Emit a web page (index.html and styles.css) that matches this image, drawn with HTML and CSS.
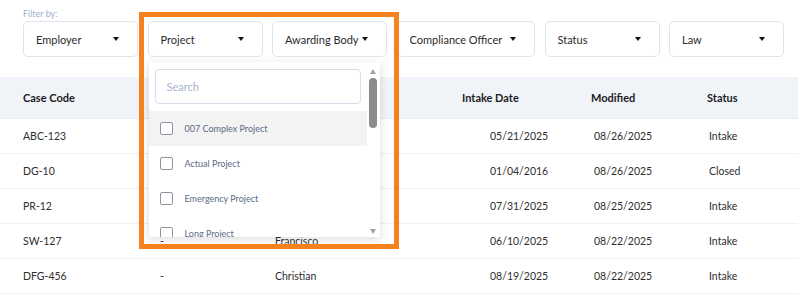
FILE: index.html
```html
<!DOCTYPE html>
<html lang="en">
<head>
  <meta charset="UTF-8">
  <meta name="viewport" content="width=device-width, initial-scale=1.0">
  <title>Cases</title>
  <link rel="stylesheet" href="styles.css">
</head>
<body>

  <!-- Filters -->
  <div class="filters">
    <div class="filter-label">Filter by:</div>
    <div class="filter-bar">
      <div class="filter"><span class="filter-text">Employer</span><span class="caret"></span></div>
      <div class="filter open">
        <span class="filter-text">Project</span><span class="caret"></span>

        <!-- Project dropdown -->
        <div class="dropdown">
          <div class="dropdown-list">
            <div class="search-wrap">
              <input type="text" class="search" placeholder="Search">
            </div>
            <div class="option active"><span class="checkbox"></span>007 Complex Project</div>
            <div class="option"><span class="checkbox"></span>Actual Project</div>
            <div class="option"><span class="checkbox"></span>Emergency Project</div>
            <div class="option"><span class="checkbox"></span>Long Project</div>
          </div>
          <div class="scrollbar">
            <span class="arrow-up"></span>
            <span class="thumb"></span>
            <span class="arrow-down"></span>
          </div>
        </div>
      </div>
      <div class="filter"><span class="filter-text">Awarding Body</span><span class="caret"></span></div>
      <div class="filter wide"><span class="filter-text">Compliance Officer</span><span class="caret"></span></div>
      <div class="filter"><span class="filter-text">Status</span><span class="caret"></span></div>
      <div class="filter"><span class="filter-text">Law</span><span class="caret"></span></div>
    </div>
  </div>

  <!-- Cases table -->
  <div class="table">
    <div class="row head">
      <div>Case Code</div>
      <div></div>
      <div></div>
      <div>Intake Date</div>
      <div>Modified</div>
      <div>Status</div>
    </div>
    <div class="row">
      <div>ABC-123</div><div></div><div></div>
      <div class="intake">05/21/2025</div><div class="mod">08/26/2025</div><div class="stat">Intake</div>
    </div>
    <div class="row">
      <div>DG-10</div><div></div><div></div>
      <div class="intake">01/04/2016</div><div class="mod">08/26/2025</div><div class="stat">Closed</div>
    </div>
    <div class="row">
      <div>PR-12</div><div></div><div></div>
      <div class="intake">07/31/2025</div><div class="mod">08/25/2025</div><div class="stat">Intake</div>
    </div>
    <div class="row">
      <div>SW-127</div><div>-</div><div>Francisco</div>
      <div class="intake">06/10/2025</div><div class="mod">08/22/2025</div><div class="stat">Intake</div>
    </div>
    <div class="row">
      <div>DFG-456</div><div>-</div><div>Christian</div>
      <div class="intake">08/19/2025</div><div class="mod">08/22/2025</div><div class="stat">Intake</div>
    </div>
  </div>

  <!-- highlight frame -->
  <div class="highlight"></div>

</body>
</html>
```

FILE: styles.css
```css
  * {
    box-sizing: border-box;
  }
  body, html {
    margin: 0;
    padding: 0;
    width: 100%;
    height: 100%;
    font-family: Lato, "Liberation Sans", sans-serif;
    background-color: #fff;
    color: #2a2a2a;
    overflow: hidden;
  }
  .filters {
    padding: 9px 0 0 23px;
  }
  .filter-label {
    font-size: 9px;
    color: #a3b1cc;
    height: 12px;
    line-height: 10px;
  }
  .filter-bar {
    display: flex;
    gap: 9.5px;
  }
  .filter {
    position: relative;
    width: 115px;
    height: 36px;
    border: 1px solid #dfe4ec;
    border-radius: 5px;
    display: flex;
    align-items: center;
    padding: 0 18px 0 12px;
    font-size: 11px;
    color: #2b2b2b;
  }
  .filter.wide {
    width: 138.5px;
  }
  .filter-text {
    flex: 1;
    overflow: hidden;
    white-space: nowrap;
  }
  .caret {
    width: 0;
    height: 0;
    margin-left: 3px;
    border-left: 3.5px solid transparent;
    border-right: 3.5px solid transparent;
    border-top: 4px solid #111;
  }

  /* dropdown */
  .dropdown {
    position: absolute;
    top: 40px;
    left: 0;
    width: 231px;
    height: 175px;
    background: #fff;
    display: flex;
    overflow: hidden;
    box-shadow: 0 2px 8px rgba(0, 0, 0, 0.14);
    z-index: 5;
  }
  .dropdown-list {
    flex: 1;
  }
  .search-wrap {
    padding: 7px 6px;
  }
  .search {
    width: 100%;
    height: 35px;
    border: 1px solid #d8dfea;
    border-radius: 4px;
    padding: 0 11px;
    font-family: inherit;
    font-size: 11px;
    outline: none;
  }
  .search::placeholder {
    color: #a9b5cc;
  }
  .option {
    height: 35px;
    display: flex;
    align-items: center;
    gap: 12px;
    padding-left: 11px;
    font-size: 9px;
    color: #5b6a85;
  }
  .option.active {
    background: #f3f3f3;
  }
  .checkbox {
    width: 13px;
    height: 13px;
    border: 1.5px solid #8d94a0;
    border-radius: 2px;
    background: #fff;
  }
  .scrollbar {
    width: 13px;
    display: flex;
    flex-direction: column;
    align-items: center;
    padding-top: 7px;
  }
  .arrow-up, .arrow-down {
    width: 0;
    height: 0;
    border-left: 3.5px solid transparent;
    border-right: 3.5px solid transparent;
  }
  .arrow-up {
    border-bottom: 5px solid #a3a3a3;
  }
  .arrow-down {
    border-top: 5px solid #a3a3a3;
    margin-top: 101px;
  }
  .thumb {
    width: 8px;
    height: 50px;
    margin-top: 4px;
    border-radius: 4px;
    background: #8c8c8c;
  }

  /* table */
  .table {
    margin-top: 20px;
  }
  .row {
    display: grid;
    grid-template-columns: 137px 115px 187px 129px 116px auto;
    align-items: center;
    height: 35px;
    padding-left: 23px;
    border-bottom: 1.5px solid #edf0f5;
    font-size: 10.5px;
    color: #2e2e2e;
  }
  .row.head {
    height: 42px;
    background: #f0f3f8;
    border-bottom: 1.5px solid #e6eaf1;
    font-weight: bold;
    font-size: 11px;
    color: #1c1c1c;
  }
  .intake {
    padding-left: 28px;
  }
  .mod {
    padding-left: 3px;
  }
  .stat {
    padding-left: 2px;
  }

  /* orange frame */
  .highlight {
    position: absolute;
    left: 139px;
    top: 12px;
    width: 260px;
    height: 237px;
    border: 5px solid #f5821f;
    z-index: 10;
  }
```
